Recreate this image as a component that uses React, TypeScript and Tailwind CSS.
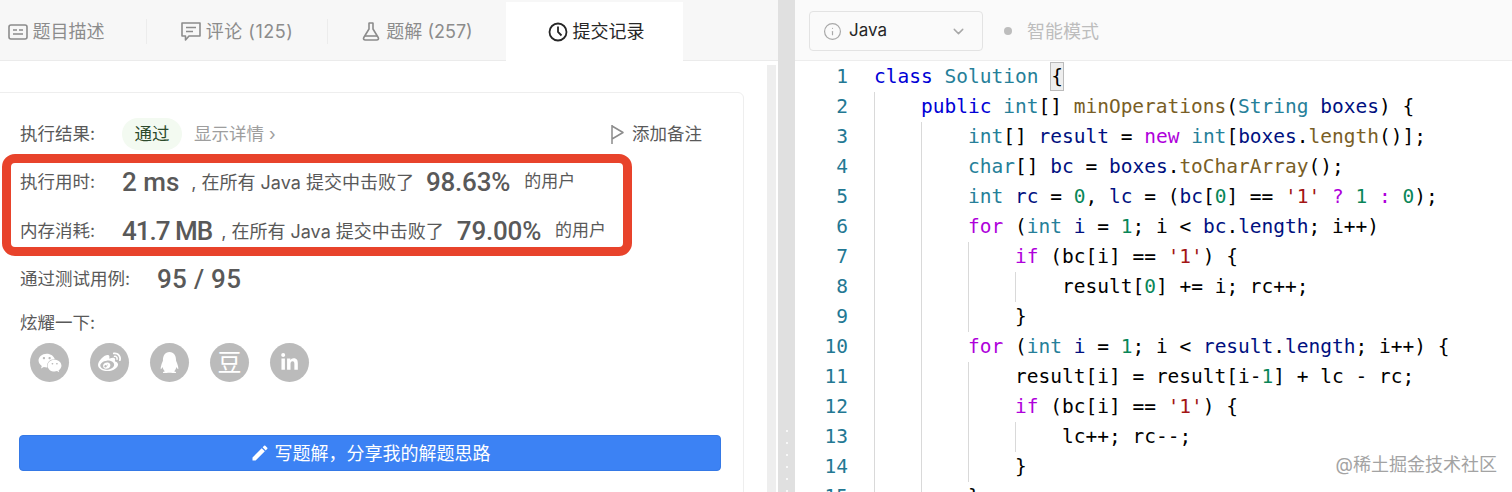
import { ChevronDown, Info } from 'lucide-react';
import { FaLinkedinIn, FaQq, FaWeibo, FaWeixin } from 'react-icons/fa';
import { MdEdit } from 'react-icons/md';

type Token = [string, string?];

const KW = 'text-[#0000d6]';
const TYPE = 'text-[#267f99]';
const FN = 'text-[#795e26]';
const VAR = 'text-[#001080]';
const CTRL = 'text-[#af00db]';
const NUM = 'text-[#098658]';
const STR = 'text-[#a31515]';

const lines: { indent: number; tokens: Token[] }[] = [
  { indent: 0, tokens: [['class', KW], [' '], ['Solution', TYPE], [' ']] },
  { indent: 1, tokens: [['public', KW], [' '], ['int', TYPE], ['[] '], ['minOperations', FN], ['('], ['String', TYPE], [' '], ['boxes', VAR], [') {']] },
  { indent: 2, tokens: [['int', TYPE], ['[] '], ['result', VAR], [' = '], ['new', CTRL], [' '], ['int', TYPE], ['['], ['boxes', VAR], ['.'], ['length', FN], ['()];']] },
  { indent: 2, tokens: [['char', TYPE], ['[] '], ['bc', VAR], [' = '], ['boxes', VAR], ['.'], ['toCharArray', FN], ['();']] },
  { indent: 2, tokens: [['int', TYPE], [' '], ['rc', VAR], [' = '], ['0', NUM], [', '], ['lc', VAR], [' = ('], ['bc', VAR], ['['], ['0', NUM], ['] == '], ["'1'", STR], [' '], ['?', CTRL], [' '], ['1', NUM], [' '], [':', CTRL], [' '], ['0', NUM], [');']] },
  { indent: 2, tokens: [['for', CTRL], [' ('], ['int', TYPE], [' '], ['i', VAR], [' = '], ['1', NUM], ['; i < '], ['bc', VAR], ['.'], ['length', VAR], ['; i++)']] },
  { indent: 3, tokens: [['if', CTRL], [' (bc[i] == '], ["'1'", STR], [') {']] },
  { indent: 4, tokens: [['result['], ['0', NUM], ['] += i; rc++;']] },
  { indent: 3, tokens: [['}']] },
  { indent: 2, tokens: [['for', CTRL], [' ('], ['int', TYPE], [' '], ['i', VAR], [' = '], ['1', NUM], ['; i < '], ['result', VAR], ['.'], ['length', VAR], ['; i++) {']] },
  { indent: 3, tokens: [['result[i] = result[i-'], ['1', NUM], ['] + lc - rc;']] },
  { indent: 3, tokens: [['if', CTRL], [' (bc[i] == '], ["'1'", STR], [') {']] },
  { indent: 4, tokens: [['lc++; rc--;']] },
  { indent: 3, tokens: [['}']] },
  { indent: 2, tokens: [['}']] },
];

const DescIcon = () => (
  <svg width="20" height="20" viewBox="0 0 20 20" fill="none" stroke="#8c8c8c" strokeWidth="1.6">
    <rect x="1" y="3" width="18" height="14" rx="2" />
    <path d="M5 8h4M11 8h4M5 12h10" />
  </svg>
);

const CommentIcon = () => (
  <svg width="20" height="21" viewBox="0 0 20 21" fill="none" stroke="#8c8c8c" strokeWidth="1.6">
    <path d="M1 2h18v13H8l-3.500 4v-4H1z" strokeLinejoin="round" />
    <path d="M5 6.500h10M5 10.500h7" />
  </svg>
);

const FlaskIcon = () => (
  <svg width="20" height="21" viewBox="0 0 20 21" fill="none" stroke="#8c8c8c" strokeWidth="1.6">
    <path d="M7.500 2h5M8 2v6L2.800 16.500C2 18 2.800 19 4.300 19h11.400c1.500 0 2.300-1 1.500-2.500L12 8V2" strokeLinejoin="round" />
    <path d="M4 15h12" />
  </svg>
);

const ClockIcon = () => (
  <svg width="20" height="20" viewBox="0 0 20 20" fill="none" stroke="#262626" strokeWidth="1.8">
    <circle cx="10" cy="10" r="8.500" />
    <path d="M10 4.500V10l3.500 3.500" />
  </svg>
);

const FlagIcon = () => (
  <svg width="15" height="21" viewBox="0 0 15 21" fill="none" stroke="#8c8c8c" strokeWidth="1.5">
    <path d="M2 1v19M2 2l11 6.500L2 15" strokeLinejoin="round" />
  </svg>
);

const Tab = ({ icon, label, width }: { icon: React.ReactNode; label: string; width: string }) => (
  <div className={`flex h-full items-center justify-center gap-[5px] text-[18px] text-[#8c8c8c] ${width}`}>
    {icon}
    <span>{label}</span>
  </div>
);

const Divider = () => <div className="h-[25px] w-px bg-[#ececec]" />;

const StatRow = ({ label, value, value2, gapCls, pctCls, valueCls }: { label: string; value: string; value2: string; gapCls: string; pctCls: string; valueCls?: string }) => (
  <div className="flex h-[30px] items-center whitespace-pre text-[#595959]">
    <span className="w-[102px] text-[17.500px]">{label}</span>
    <span className={`font-['Roboto'] text-[26px] font-medium ${valueCls ?? ''}`}>{value}</span>
    <span className={`text-[18px] ${gapCls}`}>, 在所有 Java 提交中击败了</span>
    <span className={`font-['Roboto'] text-[26px] font-medium tracking-[-0.2px] ${pctCls}`}>{value2}</span>
    <span className="ml-[14px] text-[17px]">的用户</span>
  </div>
);

const Social = ({ children }: { children: React.ReactNode }) => (
  <div className="flex h-[39px] w-[39px] items-center justify-center rounded-full bg-[#bbbbbb] text-white">
    {children}
  </div>
);

const LeftPanel = () => (
  <div className="flex w-[778px] shrink-0 flex-col">
    <div className="flex h-[61px] shrink-0 items-stretch border-b border-[#ebebeb] bg-[#f7f7f7] pt-[3px]">
      <div className="-ml-[34px] flex items-center">
        <Tab icon={<DescIcon />} label="题目描述" width="w-[180px]" />
        <Divider />
        <Tab icon={<CommentIcon />} label="评论 (125)" width="w-[180px] tracking-[0.5px]" />
        <Divider />
        <Tab icon={<FlaskIcon />} label="题解 (257)" width="w-[178px]" />
        <div className="flex h-[60px] w-[177px] items-center justify-center gap-[5px] bg-white pl-[3px] text-[18px] text-[#262626]">
          <ClockIcon />
          <span>提交记录</span>
        </div>
      </div>
    </div>
    <div className="flex flex-1">
      <div className="flex w-[767px] pt-[31px]">
        <div className="-ml-[10px] w-[754px] rounded-t-md border border-[#eeeeee] pl-[29px] pt-[25px]">
          <div className="flex h-[32px] items-center text-[17.500px] text-[#595959]">
            <span className="w-[102px]">执行结果:</span>
            <span className="flex h-[32px] w-[60px] items-center justify-center rounded-full bg-[#f3faf1] text-[#2c4a2c]">通过</span>
            <span className="ml-[12px] text-[#9e9e9e]">显示详情 ›</span>
            <span className="ml-auto mr-[41px] flex items-center gap-[7px]">
              <FlagIcon />
              添加备注
            </span>
          </div>
          <div className="-ml-[18px] mt-[4px] w-[630px] rounded-[13px] border-[9px] border-[#e8432b] pb-[1px] pl-[9px] pt-[4px]">
            <div className="flex flex-col gap-[19px]">
              <StatRow label="执行用时:" value="2 ms" value2="98.63%" gapCls="ml-[12px]" pctCls="ml-[12px]" />
              <StatRow label="内存消耗:" value="41.7 MB" value2="79.00%" gapCls="ml-[9px]" pctCls="ml-[13px]" valueCls="tracking-[-1px]" />
            </div>
          </div>
          <div className="mt-[8px] flex h-[30px] items-center text-[#595959]">
            <span className="w-[137px] text-[17.500px]">通过测试用例:</span>
            <span className="font-['Roboto'] text-[26px] font-medium tracking-[0.3px]">95 / 95</span>
          </div>
          <div className="mt-[14px] flex h-[30px] items-center text-[17.500px] text-[#595959]">炫耀一下:</div>
          <div className="mt-[5px] flex gap-[21px] pl-[10px]">
            <Social><FaWeixin size={24} /></Social>
            <Social><FaWeibo size={23} /></Social>
            <Social><FaQq size={21} /></Social>
            <Social><span className="text-[24px] leading-none">豆</span></Social>
            <Social><FaLinkedinIn size={19} /></Social>
          </div>
          <button className="-ml-px mt-[53px] flex h-[36px] w-[702px] items-center justify-center gap-[5px] rounded border border-[#3579e6] bg-[#3c82f4] text-[18px] text-white">
            <MdEdit size={20} />
            {'写题解\uFF0C分享我的解题思路'}
          </button>
        </div>
      </div>
      <div className="mt-[4px] h-[440px] w-[9px] bg-[#eeeeee]" />
    </div>
  </div>
);

const Splitter = () => (
  <div className="flex w-[17px] shrink-0 flex-col items-center gap-[10px] bg-[#e0e0e0] pt-[430px]">
    {[0, 1, 2, 3, 4, 5].map((i) => (
      <span key={i} className="h-[2px] w-[2px] rounded-full bg-white" />
    ))}
  </div>
);

const CodeLine = ({ n, indent, tokens }: { n: number; indent: number; tokens: Token[] }) => (
  <div className="flex h-[30px] shrink-0 items-center whitespace-pre leading-[30px]">
    <span className="w-[53px] shrink-0 text-right text-[#237893]">{n}</span>
    <span className="w-[26px] shrink-0" />
    {Array.from({ length: indent }).map((_, i) => (
      <span key={i} className="h-[30px] w-[47px] shrink-0 border-l border-[#d9d9d9]" />
    ))}
    <span className="text-black">
      {tokens.map(([text, cls], i) => (
        <span key={i} className={cls}>{text}</span>
      ))}
      {n === 1 && <span className="inline-block h-[29px] border border-[#bbbbbb] bg-[#eeeeee] align-top leading-[28px]">{'{'}</span>}
    </span>
  </div>
);

const RightPanel = () => (
  <div className="relative flex min-w-0 flex-1 flex-col">
    <div className="flex h-[61px] shrink-0 items-center gap-[21px] border-b border-[#ededed] bg-[#fafafa] pl-[14px] pt-[2px]">
      <div className="flex h-[40px] w-[174px] items-center rounded border border-[#e3e3e3] pl-[13px] pr-[15px] text-[17px] text-[#262626]">
        <Info size={19} strokeWidth={1.5} className="text-[#a8a8a8]" />
        <span className="ml-[7px]">Java</span>
        <ChevronDown size={17} className="ml-auto text-[#a8a8a8]" />
      </div>
      <span className="h-[8px] w-[8px] rounded-full bg-[#bdbdbd]" />
      <span className="-ml-[6px] text-[18px] text-[#bdbdbd]">智能模式</span>
    </div>
    <div className="bg-white pt-px font-['DejaVu_Sans_Mono','Liberation_Mono',monospace] text-[19.500px]">
      {lines.map((line, i) => (
        <CodeLine key={i} n={i + 1} indent={line.indent} tokens={line.tokens} />
      ))}
    </div>
    <span className="absolute bottom-[14px] right-[15px] text-[18px] text-[#a3a3a3]">@稀土掘金技术社区</span>
  </div>
);

export default function App() {
  return (
    <div className="flex h-[492px] w-[1512px] overflow-hidden bg-white font-['Inter','Noto_Sans_CJK_SC',sans-serif]">
      <LeftPanel />
      <Splitter />
      <RightPanel />
    </div>
  );
}
